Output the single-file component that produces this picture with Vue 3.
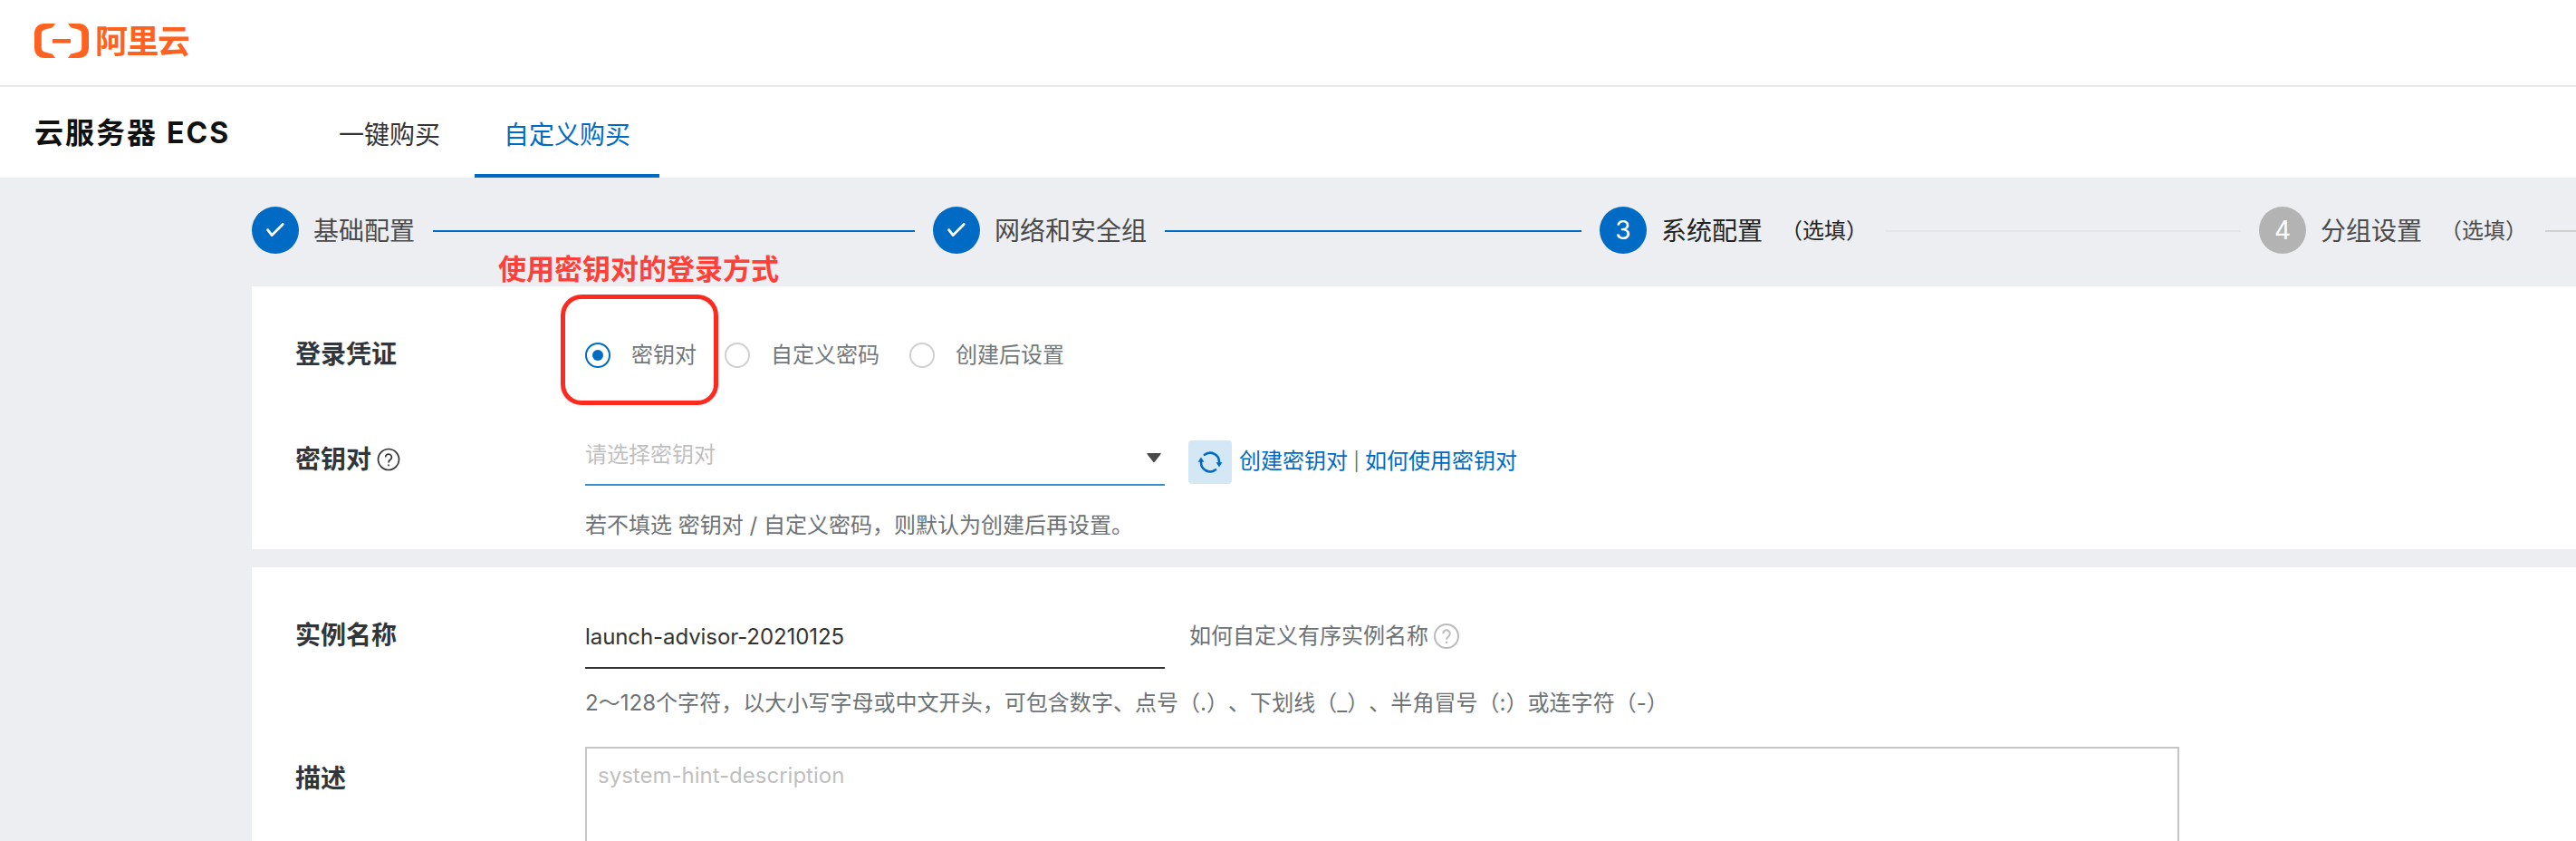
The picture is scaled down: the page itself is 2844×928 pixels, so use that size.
<script setup>
const tabs = [
  { name: '一键购买', active: false },
  { name: '自定义购买', active: true },
]
const steps = [
  { no: 1, name: '基础配置', state: 'done' },
  { no: 2, name: '网络和安全组', state: 'done' },
  { no: 3, name: '系统配置', note: '（选填）', state: 'current' },
  { no: 4, name: '分组设置', note: '（选填）', state: 'todo' },
]
const credentials = [
  { name: '密钥对', checked: true },
  { name: '自定义密码', checked: false },
  { name: '创建后设置', checked: false },
]
</script>

<template>
  <div class="page">
    <header class="brand">
      <svg class="brand-mark" width="60" height="38" viewBox="0 0 60 38">
        <path d="M23 0H11C4.500 0 0 4.500 0 11v16c0 6.500 4.500 11 11 11h12l-3-4.200-9-2.600c-2-.7-3.200-2.200-3.200-4.200V11c0-2 1.200-3.500 3.200-4.200l9-2.600z" />
        <path d="M37 0h12c6.500 0 11 4.500 11 11v16c0 6.500-4.500 11-11 11H37l3-4.200 9-2.600c2-.7 3.200-2.200 3.200-4.200V11c0-2-1.200-3.500-3.200-4.200l-9-2.600z" />
        <path d="M20 17h20v4.600H20z" />
      </svg>
      <span class="brand-name">阿里云</span>
    </header>

    <nav class="nav">
      <h1 class="product">云服务器 <span class="product-code">ECS</span></h1>
      <div class="tabs">
        <a v-for="t in tabs" :key="t.name" class="tab" :class="{ active: t.active }">{{ t.name }}</a>
      </div>
    </nav>

    <main class="main">
      <div class="steps">
        <div v-for="s in steps" :key="s.no" class="step" :class="['step-' + s.no, s.state]">
          <span class="dot">
            <svg v-if="s.state === 'done'" width="20" height="16" viewBox="0 0 20 16">
              <path d="M1.600 7.600l4.600 6L18.200 1.600" fill="none" stroke="#fff" stroke-width="2.800" stroke-linecap="round" stroke-linejoin="round" />
            </svg>
            <template v-else>{{ s.no }}</template>
          </span>
          <span class="step-name">{{ s.name }}</span>
          <span v-if="s.note" class="step-note">{{ s.note }}</span>
          <i class="line"></i>
        </div>
      </div>

      <div class="annotation-text">使用密钥对的登录方式</div>
      <div class="annotation-box"></div>

      <section class="card card-login">
        <div class="row row-credential">
          <div class="label">登录凭证</div>
          <div class="radios">
            <label v-for="c in credentials" :key="c.name" class="radio" :class="{ checked: c.checked }">
              <span class="ring"></span><span>{{ c.name }}</span>
            </label>
          </div>
        </div>
        <div class="row row-keypair">
          <div class="label">
            密钥对
            <svg class="help" width="26" height="26" viewBox="0 0 26 26" fill="none" stroke="#333" stroke-width="1.700">
              <circle cx="13" cy="13" r="11.500" />
              <path d="M9.600 10.500a3.400 3.400 0 1 1 5.300 2.800c-1.300.9-1.900 1.500-1.900 3.100" />
              <path d="M13 18.400v1.900" />
            </svg>
          </div>
          <div class="select">
            <span class="placeholder">请选择密钥对</span>
            <svg class="caret" width="16" height="10" viewBox="0 0 16 10"><path d="M1 0h14q1.400 0 .6 1L9 9.400q-1 1-2 0L.4 1Q-.4 0 1 0z" fill="#4a4a4a" /></svg>
          </div>
          <div class="extra">
            <span class="refresh">
              <svg width="28" height="24" viewBox="0 0 28 24">
                <g fill="none" stroke="#006bc4" stroke-width="2.600" stroke-linecap="round">
                  <path d="M7.900 3.800A10 10 0 0 1 24 12.200" />
                  <path d="M20.100 20.300A10 10 0 0 1 4 11.800" />
                </g>
                <path d="M20.600 12.200h6.800L24 17.600zM.6 11.800h6.800L4 6.400z" fill="#006bc4" />
              </svg>
            </span>
            <span class="links"><a class="link">创建密钥对</a><span class="sep">|</span><a class="link">如何使用密钥对</a></span>
          </div>
        </div>
        <p class="hint">若不填选 密钥对 / 自定义密码，则默认为创建后再设置。</p>
      </section>

      <section class="card card-instance">
        <div class="row row-name">
          <div class="label">实例名称</div>
          <div class="input">launch-advisor-20210125</div>
          <div class="extra">
            <span>如何自定义有序实例名称</span>
            <svg class="help-gray" width="28" height="28" viewBox="0 0 28 28" fill="none" stroke="#bbb" stroke-width="2">
              <circle cx="14" cy="14" r="13" />
              <path d="M10.200 11.200a3.800 3.800 0 1 1 5.900 3.100c-1.500 1-2.100 1.700-2.100 3.500" />
              <path d="M14 19.800v2.200" />
            </svg>
          </div>
        </div>
        <p class="hint">2～128个字符，以大小写字母或中文开头，可包含数字、点号（.）、下划线（_）、半角冒号（:）或连字符（-）</p>
        <div class="row row-desc">
          <div class="label">描述</div>
          <div class="textarea">system-hint-description</div>
        </div>
      </section>
    </main>
  </div>
</template>

<style>
html,
body {
  overflow: hidden;
}
</style>

<style scoped>
.page {
  width: 2844px;
  height: 928px;
  overflow: hidden;
  display: flex;
  flex-direction: column;
  background: #fff;
  color: #333;
  font-family: Inter, "Noto Sans CJK SC", sans-serif;
  font-size: 24px;
  line-height: 32px;
  white-space: nowrap;
  text-spacing-trim: space-all;
}
.brand {
  height: 96px;
  flex: none;
  display: flex;
  align-items: center;
  padding: 0 0 4px 38px;
  box-sizing: border-box;
  border-bottom: 2px solid #e8e8e8;
}
.brand-mark {
  fill: #ff6220;
}
.brand-name {
  margin: 2px 0 0 7px;
  font-size: 36px;
  font-weight: 600;
  letter-spacing: -1.500px;
  color: #ff6220;
}
.nav {
  height: 100px;
  flex: none;
  display: flex;
  padding-left: 38px;
}
.product {
  width: 304px;
  margin: 0;
  font-size: 32px;
  line-height: 102px;
  font-weight: 600;
  letter-spacing: 2px;
  color: #111;
}
.product-code {
  font-weight: 700;
}
.tabs {
  display: flex;
  gap: 6px;
}
.tab {
  box-sizing: border-box;
  padding: 0 32px;
  font-size: 28px;
  line-height: 106px;
  height: 100px;
}
.tab.active {
  color: #006bc4;
  border-bottom: 4px solid #006bc4;
}
.main {
  position: relative;
  flex: 1;
  padding: 32px 0 0 278px;
  background: #edeef2;
}
.steps {
  display: flex;
  height: 52px;
  margin-bottom: 36px;
}
.step {
  display: flex;
  align-items: center;
  flex: none;
  font-size: 28px;
  color: #4a4a4a;
}
.step-1 { width: 752px; }
.step-2 { width: 736px; }
.step-3 { width: 728px; }
.step-4 { width: 728px; }
.dot {
  width: 52px;
  height: 52px;
  flex: none;
  display: flex;
  align-items: center;
  justify-content: center;
  border-radius: 50%;
  background: #006bc4;
  color: #fff;
}
.step-name {
  margin: 1px 0 0 16px;
}
.step-note {
  margin: 2px 0 0 20px;
  font-size: 24px;
}
.current {
  color: #222;
}
.line {
  flex: 1;
  height: 2px;
  margin: 2px 20px 0;
  background: #006bc4;
}
.current .line {
  background: #e4e5e7;
}
.todo .line {
  background: #d0d0d1;
}
.todo .dot {
  background: #b3b3b3;
}
.annotation-text {
  position: absolute;
  left: 550px;
  top: 81px;
  z-index: 2;
  font-size: 31px;
  line-height: 40px;
  font-weight: 600;
  color: #ff4038;
}
.annotation-box {
  position: absolute;
  left: 619px;
  top: 129px;
  z-index: 2;
  width: 174px;
  height: 122px;
  box-sizing: border-box;
  border: 5px solid #ff2a1f;
  border-radius: 23px;
}
.card {
  box-sizing: border-box;
  padding-left: 48px;
  background: #fff;
}
.card-login {
  height: 290px;
}
.card-instance {
  height: 302px;
  margin-top: 20px;
}
.row {
  display: grid;
  grid-template-columns: 320px 640px auto;
  justify-content: start;
}
.label {
  display: flex;
  align-items: center;
  height: 42px;
  font-size: 28px;
  font-weight: 600;
  color: #2f363c;
}
.help {
  margin-left: 6px;
}
.row-credential {
  padding-top: 54px;
  height: 116px;
}
.radios {
  display: flex;
  align-items: center;
  height: 44px;
}
.radio {
  display: flex;
  align-items: center;
  gap: 23px;
  margin-right: 31px;
  color: #73787b;
}
.radio + .radio {
  margin-right: 33px;
}
.ring {
  width: 28px;
  height: 28px;
  box-sizing: border-box;
  border: 2px solid #d0d0d0;
  border-radius: 50%;
  display: flex;
  align-items: center;
  justify-content: center;
}
.checked .ring {
  border-color: #006bc4;
}
.checked .ring::after {
  content: "";
  width: 12px;
  height: 12px;
  border-radius: 50%;
  background: #006bc4;
}
.select,
.input {
  display: flex;
  align-items: center;
  box-sizing: border-box;
  justify-content: space-between;
}
.select {
  height: 64px;
  margin-top: -14px;
  border-bottom: 2px solid #3b8ed0;
  padding-right: 4px;
}
.placeholder {
  margin-bottom: 2px;
  color: #bfbfbf;
}
.caret {
  margin-top: 4px;
}
.extra {
  display: flex;
  align-items: center;
  height: 48px;
  margin-left: 26px;
  color: #6d7275;
}
.refresh {
  width: 48px;
  height: 48px;
  margin-right: 8px;
  display: flex;
  align-items: center;
  justify-content: center;
  border-radius: 4px;
  background: #d4e7f5;
}
.links {
  display: flex;
  align-items: center;
  margin-bottom: 3px;
}
.link {
  color: #006bc4;
}
.sep {
  width: 19px;
  font-size: 20px;
  text-align: center;
}
.hint {
  margin: 28px 0 0 320px;
  color: #6d7275;
}
.row-name {
  padding-top: 54px;
}
.input {
  height: 58px;
  padding-bottom: 11px;
  border-bottom: 2px solid #333;
  letter-spacing: -0.080px;
}
.row-name .extra {
  margin: -2px 0 0 27px;
}
.help-gray {
  margin-left: 6px;
}
.row-desc {
  margin-top: 32px;
  grid-template-columns: 320px 1760px;
}
.card-instance .hint {
  margin-top: 22px;
  letter-spacing: 0.040px;
}
.row-desc .label {
  margin-top: 14px;
}
.textarea {
  box-sizing: border-box;
  height: 200px;
  padding: 14px 12px;
  border: 2px solid #c6c6c6;
  color: #bfbfbf;
}
</style>
